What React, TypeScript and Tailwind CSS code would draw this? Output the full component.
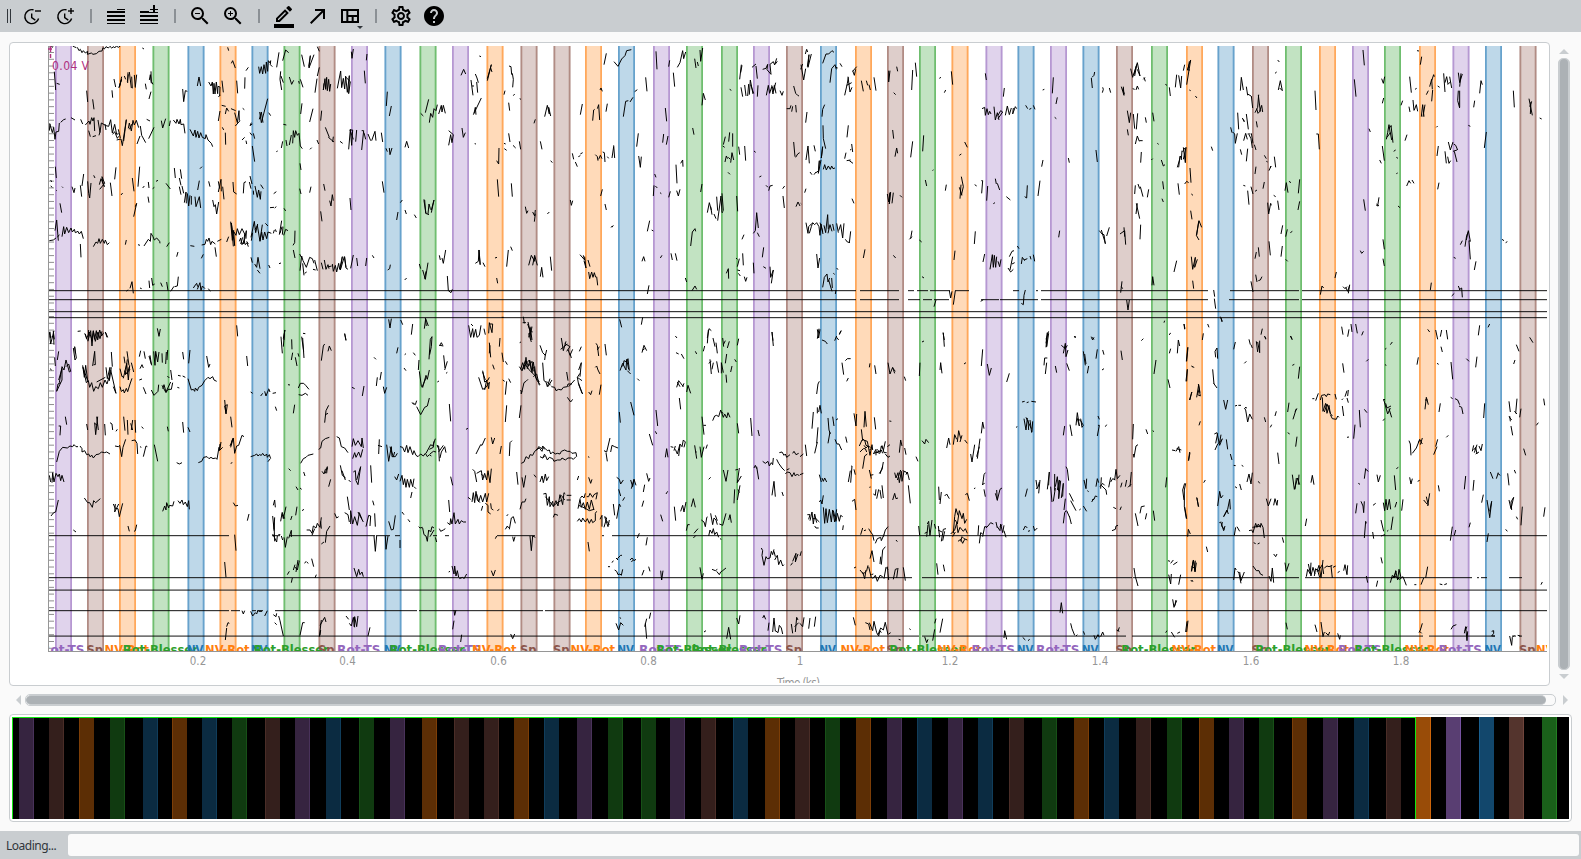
import React from "react";
import {
  MdCallMade,
  MdHelp,
  MdOutlineBorderColor,
  MdOutlineSettings,
  MdOutlineViewQuilt,
  MdZoomIn,
  MdZoomOut,
} from "react-icons/md";

type Kind = "P" | "S" | "O" | "G" | "B";

const COLORS: Record<Kind, string> = { P: "#9467bd", S: "#8c564b", O: "#ff7f0e", G: "#2ca02c", B: "#1f77b4" };
const LABELS: Record<Kind, [string, number]> = {
  P: ["Rot-TS", 43.5],
  S: ["Sp", 16.5],
  O: ["NV-Rot", 44.5],
  G: ["Rot-Blesser", 75],
  B: ["NV", 16.5],
};
const DIM: Record<Kind, string> = { P: "#362440", S: "#341f1c", O: "#5c2e05", G: "#103a10", B: "#0b2b41" };
const DIM_EDGE: Record<Kind, string> = { P: "#49325a", S: "#4a2d27", O: "#7c3e07", G: "#175017", B: "#103d5b" };
const LIT: Record<Kind, string> = { P: "#593e72", S: "#54342d", O: "#994c08", G: "#1a601a", B: "#12476c" };
const LIT_EDGE: Record<Kind, string> = { P: "#7652a0", S: "#70453c", O: "#cc650b", G: "#238023", B: "#195f90" };

const EPOCHS: [number, Kind][] = [
  [55, "P"], [87, "S"], [119, "O"], [152.5, "G"], [187.5, "B"], [219.5, "O"], [251.5, "B"], [283.5, "G"],
  [318.5, "S"], [351, "P"], [384.5, "B"], [419.5, "G"], [452, "P"], [486.5, "O"], [520.5, "S"], [553.5, "S"],
  [585, "O"], [618, "B"], [653, "P"], [686, "G"], [721, "G"], [753, "P"], [786, "S"], [820, "B"], [855, "O"],
  [887, "S"], [919, "G"], [951.5, "O"], [985.5, "P"], [1017.5, "B"], [1050, "P"], [1082.5, "B"], [1116, "S"],
  [1151, "G"], [1186, "O"], [1217.5, "B"], [1252, "S"], [1285, "G"], [1319, "O"], [1352, "P"], [1384, "G"],
  [1419, "O"], [1452.5, "P"], [1485, "B"], [1519.5, "S"],
];

const OVERVIEW: [number, Kind][] = [
  [19, "P"], [49, "S"], [79, "O"], [110, "G"], [143, "B"], [172, "O"], [202, "B"], [232, "G"], [265, "S"],
  [295, "P"], [326, "B"], [359, "G"], [390, "P"], [422, "O"], [454, "S"], [484, "S"], [514, "O"], [544, "B"],
  [577, "P"], [608, "G"], [641, "G"], [670, "P"], [701, "S"], [733, "B"], [765, "O"], [795, "S"], [825, "G"],
  [856, "O"], [887, "P"], [917, "B"], [948, "P"], [978, "B"], [1009, "S"], [1042, "G"], [1074, "O"],
  [1104, "B"], [1136, "S"], [1167, "G"], [1199, "O"], [1229, "P"], [1259, "G"], [1292, "O"], [1323, "P"],
  [1354, "B"], [1386, "S"], [1416, "O"], [1446, "P"], [1479, "B"], [1509, "S"], [1542, "G"],
];

const FLAT: [number, number[]][] = [
  [290, [49, 856, 860, 899, 908, 914, 917, 928, 930, 950, 955, 969, 1013, 1019, 1036, 1038, 1041, 1208, 1230, 1299, 1302, 1547]],
  [299, [49, 856, 860, 899, 908, 920, 923, 932, 934, 949, 981, 999, 1000, 1038, 1041, 1208, 1229, 1299, 1302, 1547]],
  [311, [49, 1547]],
  [317, [49, 1547]],
  [535, [49, 229, 272, 280, 289, 375, 376, 390, 395, 400, 433, 437, 445, 449, 497, 535, 602, 604, 612, 1547]],
  [577, [49, 912, 922, 1132, 1133, 1299, 1305, 1472, 1477, 1479, 1481, 1487, 1509, 1522]],
  [589.5, [49, 1547]],
  [610, [49, 229, 231, 240, 252, 256, 258, 263, 275, 417, 419, 543, 545, 1547]],
  [635.5, [49, 919, 922, 1126, 1132, 1423, 1429, 1495, 1512, 1516, 1519, 1522]],
];

/** Spike traces, three units per pixel, one block for each 400 px section. */
const TRACES: [number, number, string][] = [
  [0, 40, `M148 22l4-4 4 4 4-3M218 18l6 3 5 2M232 22l5 10 4-4 5 10 4-6 6 7 7-5-1 9 12-4 5 4 10-2 8-7 9-1 3-10 4 4 5-7 7 4 5-5 5 5 6-4 3 4 5-6 6 4 6-4M427 24l5 3
M163 95l4 55M170 130l9 3M260 152l3 34M278 178l4 30M342 117l5 24M336 151l2 22M357 143l8-26-8 26M365 110l-6 30M373 108l4 10M384 97l-1 32M382 125l3-22M388 96l6 48M397 145l-2-35M403 105l3 38M406 140l4-36M436 131l3 17M448 120l3-16 3 26M453 94l1 30 5 9M453 155l-6 22M548 147l3 38 5-33 6 2M592 138l5-27 5 27M626 126l7 12 4-12 3 36 2-32 3 32 4-36 4 35 1-22 6 2-1 27M655 170l6-4M666 122l4 35M694 70l4-8 8 22M683 22l3 10M710 122l3 38M735 112l-1 34M738 92l7-10
M776 80l3 20 5-20 4 22 4-28 5 26 2-34 4 28 2-32 4 6 3-6-1 12 6 6M830 82l7-45M848 62l9-32 9 8M842 94l-2 24 5 32M843 108l7 20M868 111l7 22 6-12M901 118l8 24M896 123l2 8M905 44l8 36M926 80l5-33-4 37 15-40M958 82l-6 26M952 20l6 14M945 158l6-42M972 130l-2 20 5-34 2 32 3-36 2 40 4-34 3 36 3-22M1012 145l10-52 3 50 5-28 4 32 3-38 5 48 6-50-2 54 5-36-16-16M1054 35l2 20 4-28M1099 61l2-19M1093 92l3 38M1162 155l-3 43M1168 228l6-30
M150 252l-2 20M149 250l8 28 4-16 4 36 3-22 8-2 2-25M182 247l9-8 6-2M213 233l12 7M242 238l6 14M256 255l11-12 3 10 5-20 4 10 3-10 2 40M266 272l5 18M278 290l10-3M294 240l6 37 4-28 14 8 8 2 6-20 5 40 7-26 6 30 6-2M297 286l3-10M318 270l-3-18M338 283l6-8 8 20 4-6M350 300l13-3 4 20 12-78-8 64M355 268l6 26M385 265l3-16 6 24 5-32 4 14 6-14 7 22M388 268l8-16M411 312l9-24M421 258l4 28 12 22M440 238l10 5M446 296l16-34M484 242l4 22 9-28M508 258l3-16M520 240l8 10 3-12 6 14 4-14 2 16 8-2 4 28M570 268l10 20 5-18 3 22 5-18 4 20 5-16 5 14 9 4 2-12 6 16 10 10 4 10M655 243l5-30M665 196l12 3M676 222l4-18 6 10M693 206l14 6M704 218l8 30 5-36 1 30M706 258l14-16M728 205l5 4M667 262l4 8M676 278l1 36M726 300l8-8M740 312l-2-10M750 278l6 8M760 280l4 16M757 318l7 47M750 258l4-10M779 216l5 32 19-72M778 238l6-22 5 32M806 218l6 9M850 253l9 2M829 335l4-2M844 324l4-20M858 300l3 18M868 315l6-30M878 310l2-38 4 20 3-20 5 14 5-6 4 38 6 8M902 222l4-32M929 246l10-40M962 242l3-30M930 328l5-5M951 300l5 12M976 262l12 30M985 292l17 14M1000 290l-2 16M1020 304l8 6M1046 328l5-60 4 48 3-46-8 0 10 28M1070 270l-3 35M1085 330l6-58-6 0M1092 278l5 20M1104 282l8 20M1115 302l10-28 3 28M1144 278l4 28M757 252l-6 4M1158 325l4 10M1168 324l2 20 6-20
M166 380l3 34M152 420l3 6M152 438l5 4M186 440l3 3M168 450l2 2M216 440l6 18 3-14M241 436l4 34M246 438l5-36M263 424l3 36 3 14 4-45M281 406l4 8M298 434l5-18 10 24-5-14-2-16 8 20-15 18M331 428l5 40M344 418l4-36M363 465l5-6M397 414l5 40M414 440l5-60M428 444l5-6M445 426l2 18M458 446l5-4M468 424l6-3M498 430l13 17M523 384l3 30M541 388l4 28M538 414l5 22M538 440l5 24M546 438l5 22M553 488l5-32 1 34M562 460l4 38 4-32M574 494l0-26M585 470l3 30 10-30 4 34M593 450l5-28M600 386l6-6M626 424l4 16M655 456l8-38 1 36M655 424l4 22M668 440l4 38M699 426l2 30 9 6M730 460l2-32 6-3M750 408l6 24M748 426l5 20M760 452l1 12M765 438l7 34 4-22 5 28 2-24M782 434l8 12M821 461l8-6M810 503l12-1M824 504l5-4M899 446l4 16M929 458l4-18M971 432l4 20M900 370l3 20M180 490l5 28M401 530l9-40-4 10M444 470l3 18M638 480l4 20 4-6 4 28 6-36M989 482l4 16 4-34 3 18M1050 474l3 36M1147 424l5 34M852 505l5 8M962 514l4 30M1190 540l4-24
M148 602l12-2 8-6M165 572l5-32 5 62M172 592l6-8M186 590l5-30 3 22 6-20 6 16 7-14 4 12 6-8 3 10 8-4 4 8 6-8 6 22M241 612l2 40M280 620l8-14 5 4 4-14 4 14 6-12 6 12 3-10 6 14 6-6M376 614l3-14M414 614l6 2M432 618l13-20 6 6 2-24 6 10 4 10 7-6 9 10 1 6M500 620l8-12M571 617l12 2M605 615l10-2 4-15 4 6 4-10 5 20 4-10 10 8M652 604l12-6M680 606l6-16M692 545l5 56 4-30 3 46-10-68 6 70M702 576l6 10 4-20 6 18 8-18 8 16-3 30 8-40-1 24M718 604l4-10 4 20 6-12 4 12 5-6 4 12M728 592l-6 20M740 604l5 8M753 592l10-48 4 34 6-26M758 578l-4 24M772 556l8 48 5-28 4 24 5-24 6 20 4-20 10 4M765 568l8-12M796 550l8 8M780 602l7-48M820 580l3-10M826 568l3 8M838 584l7-42M846 560l-6 20M849 560l-2 24M851 586l6-18 7 4M885 572l-1 36-5 8M880 630l5 24M530 650l4-14M604 655l6-12M645 622l4 28M753 652l4 16M764 672l6 10 4-30 6 34M772 690l8 10M806 675l4 9M837 671l6-2M900 692l5-44 4 14 10 20 10-30 8 4 5 14M899 642l5 10M908 670l4 36M914 700l6-4M939 688l8 2M944 660l8 32M964 668l5 20M973 660l5 28 6-14 3 12M987 680l8-2M997 672l3 22 6-18 4 20 6-26 3 18 8-38-6 40 12-40 5 32M1034 650l4 34 6 4M1052 685l8-40M1070 654l3 24M1097 678l3-24M1117 646l5 8M1163 690l6-4 2-12
M380 754l4-5M390 745l6-20 4 35M420 744l5 2M447 722l2 22M455 714l3 22 6-4M482 728l5 12M500 726l4 26M512 754l10-15M524 740l8-2 3-28M580 744l4-6 6-8 3 10M592 748l8-20 3 24 4-14 8 8M625 746l6 8M710 856l3 33M472 865l5 24 4-22M1166 838l4 26 4-28M152 895l-2-20M160 874l3 24M233 874l9-1M254 880l6 14M262 892l6-16 8 24 4-28 4 26 5-26 4 28 6-30 6 18 6-10M317 878l6 14M855 870l-5 26M909 880l7 1M1034 882l4 18`],
  [400, 40, `M238 48l5 2M183 106l8-18 6 14M213 120l6 46M216 138l6 0M226 102l5 12 4 14M230 126l3 32M220 224l24-50M222 220l4-18 2 22M262 122l12-48-12 42M272 84l4 12M327 78l6 2 2 24M337 100l3 18-2 24M312 164l3-12M340 167l4-5M326 188l3 24M359 176l4 2M402 250l4-12M434 230l8-34 6 26-2-20 6 26M541 224l6-32M612 74l7-34M600 150l3-6 4 10M578 242l3-32 3-2M592 206l4-12 3 46M618 215l4-24M642 65l12 14 11-22 10-10 5-15 14-3M670 230l7-46 8-2M690 186l9-14M704 155l8-6M737 112l4 42M768 34l3 54M806 80l3-19M832 82l8-14 8-36 3 24 6-20M820 98l4 42M884 56l4 28M892 66l3 12M900 30l2 34 6-40M906 196l4-36 6 20M989 148l5 3M1019 118l5-44M1022 98l4-22M1056 82l12-10M1068 78l4 38M1088 88l10-3 5-12-2 16 12 14-3-30 10-8 4 10 6-20M1028 170l-5-28M1034 135l4 33M1043 168l3-36M1048 164l3-44 8 42M1052 134l9 26M1072 170l2-34M1099 166l6-30 4 24 6-20 4 22 4-26 5 24M1115 136l6 16 6-24M1140 152l6 14 4-12M1126 72l6-8M1181 138l6 22 6 6 4 2M1160 206l10 0 3-10M1175 215l3-16M1187 195l2 22
M62 220l8 8M76 218l10-40M88 248l4-28 6 12 4-26 6 6 4-18M116 222l8-26 2 20 4-20 6 24M186 264l4 28 6-14M146 272l14 12-4 24-4-24-6 32M224 311l4 1M326 280l4 26M312 310l5 2M313 326l7 5M339 316l8 8M358 304l4 24M15 322l5-18 6 20M1 488l6-8M290 362l6 10 1-48M421 304l5 24M292 418l4 52M334 430l3 40M517 340l4 18M535 350l6-3M526 366l6 14M541 342l7-4M452 362l5 6M586 344l6 6 2 12M596 358l5-12 5 10M608 336l5 2 2 28M622 350l4 5M636 354l5-34M641 316l3 38M710 320l5-40M716 348l5 34 3-32M788 308l3-26M799 314l5-26M796 204l4 40M828 374l3 56M842 370l6-10 1 20M878 264l4 20M970 314l6-24M968 318l6 4M986 305l3-28M998 320l0-40M975 366l4-18 4 8M985 352l6 6M992 368l4-30 5 22M1016 320l3 24M1034 318l3 44M1062 333l5 4M1181 306l4 44M1187 352l6-10 6-4M764 402l4 10M602 468l5-20M615 492l4 18M766 438l6 6M760 468l2-32M780 458l4 3M806 472l5-18M830 452l5 16 5-20M902 456l4-24M984 397l6 6M1098 436l6 6M1106 452l4-14 8-2M1078 411l6-3M1148 446l6-8M1149 468l4 36M511 480l3 16 4-14M636 562l4-6M70 480l4 0 3 40 10 4M72 482l6 38M84 522l3-30 4 14 3 4 8-30-8 38M15 510l4 12M43 524l6 10M376 500l4 20 4-8M398 516l6 12 2-18M403 545l3-24M442 522l6-6M742 574l7-32M755 570l5 3M922 518l6-30 6 22M932 500l4 24M942 522l6 14M950 470l3 42M953 542l10-74 3 50 4-4M966 460l4 52M1010 468l3 46M1188 500l6-14 6 12M872 618l5-42 8-10 2 8M1060 580l6-8 4-54 5 46M1026 598l6-14M1072 578l6 12M742 762l5-26M633 562l4-4
M118 646l3 14M126 654l4 16 7-40M226 670l9-6 2-34 4 44M237 630l3 44M249 668l6 12M285 654l6-2M320 680l5-50M332 620l5 12M386 676l8-30 10 18 0-14M398 676l6-30 8 30M421 710l4-28 4 30M451 650l4 42M540 644l14 16-4-14M552 662l6 22-4-34M564 660l6 20M566 696l3 20 6-20 4 16 4-14 4 14M590 710l3 26M726 664l5-14 4 14M781 654l5-8M813 640l4 20M826 640l5 22M1012 680l6-24M1012 690l8 2M1008 654l4 4M1028 640l2 36M1087 652l4-30M1060 668l2 32M979 700l6-14 1 30M1015 700l6 8M1090 680l8 5M1110 680l2 32 8-22-6 40M856 714l4 12M876 752l9-14 5 10M1033 710l4 14 4-12M58 672l4 14M68 690l8 28 8-50M74 716l4-22M14 720l6-6M142 708l3 44 8 6 4-10M290 714l3 16
M2 840l6 14M34 884l4-32M73 866l4-30 8 22M206 856l6 36 6-26 3 26 6-24 4 24 7-6 5-30M213 852l6 6M252 866l4 18M266 880l2-32 8 30 2-26-8 0M305 832l6 0M370 830l3 20M384 846l8 34 4-20M378 848l-10 0M386 892l7-32M392 870l4 30M659 838l6 24M724 854l4-22M922 894l5-28 7 6M1116 876l3 26M826 888l5 6M76 834l3 24`],
  [800, 40, `M16 42l4-14 3 8M22 80l5-36-3 38 10-40M68 70l10-28 8 0 10-10 6 5M3 74l8 46 6-34M2 88l6-16M90 128l5-42 10-12 4 14M108 82l5 2M120 70l6 10M158 92l5 14 4-18M158 94l12-14M134 166l8-36 3-18M144 110l6 46 6-14M140 136l15-8M184 122l6 32M199 122l4 14M207 134l4 16M222 112l6 40M266 92l0 34M266 126l4-34M290 80l3 14M281 158l6 6M335 150l3-60M346 68l4 42M418 115l5-3M433 158l4-8M454 94l4 40M556 100l3 20M610 170l3-26M728 150l5-2M757 160l3-48M874 114l3 30M876 112l6-6 2-10M907 158l3-10-2-6M928 144l4 14M964 140l8 26-2-26M968 146l5 16M992 86l6 26 12-38-6 34M1002 104l10-36 8 40-8-20M998 146l6 2M1008 150l4-12 4 10M1032 112l4 12M1030 118l5-5M1096 133l5 3M1108 142l3 26M1126 142l4-38M1136 106l6 38 3-36M1150 92l4-18M1160 134l12-74-10 30 8 0M1164 90l4-26M1168 150l4 2M1186 168l5 6M982 212l6 36 4-30M1000 222l4 44M1009 268l4-48M1036 232l3 16M1058 218l4 26M982 268l3 18M1006 312l6-24 6 16M1018 302l10 0M1022 368l2-32
M66 230l2-22 6-14M17 248l4-32M69 256l1 40 7 30M64 354l4-34-4 34M18 360l6-42 4 52M42 316l4 18M30 396l6 8M42 404l6-8M48 398l8-6 2-30-3 38 8-40M70 388l4-14 5 16 6-12 6 10 4-10 4 8 6-2M141 292l4-36M134 356l4-18M140 362l12-2M150 330l4-2M155 312l3 24M148 362l11 8M14 458l4-12M2 490l2 2M156 476l6 14M278 270l3 26M285 350l5-26 3 16M332 352l6-48M368 334l3-48M376 420l4 18M398 392l2-3M436 452l3-18M494 306l8 16M478 346l6-4M480 476l3-42M486 466l-8-24M484 410l6 30-6 26M524 434l6 4M544 422l4 0M545 460l3-38M560 482l3-44M586 416l3 16M592 430l7 20M580 491l5-3M619 470l12 10M674 470l6 4 2-38M714 468l6-46M768 192l4-20M764 232l5 4M725 380l4-20M805 354l3 14M888 330l4 36M546 206l8-4 2 24 5-20 4 18 4-10 4 8M582 200l4 40 6-22 5 22M594 236l14-20-6-4-8 14M616 226l6-28 6 26 6-20M640 204l-2 18 8-22 4 6M677 196l6 10M688 208l6-3M700 196l5 12M262 462l4 24 4-28-2 34 4-36M276 490l4-32M300 466l6 6M1054 360l4-4M1084 360l6 18 5-4M1072 310l4 3M1132 382l10-34M1136 382l4-34M1144 360l2-28M1150 322l6 46 2-46-8 36M1148 336l6-12M1170 384l3 44M1154 432l6-8 6 4M1134 430l4 34M1174 462l5 4M1088 424l3 24M1006 436l-2 26M1014 432l5 14M1021 440l8 30M1042 472l4-24M1086 476l4 10M1012 490l-4 32M1009 490l10 46M1020 598l2-44M1172 512l4 26M1190 586l6-42M1174 650l4 38 8-36-2 30 8-24M1178 722l3 24
M18 548l6 32 2-20 10-10M28 580l6-20 4-12 6 6 6-6 7 12 3 26 3-34 6 30M60 548l8 26M72 556l5 22 6-54 2 44M84 580l6-26 6 20M98 552l4 20M110 550l5 28M116 572l6-18 6 40 4-44M148 608l4-34M136 598l6 8 8 2M332 596l4-24M328 598l8-8M358 600l7 6M523 612l3-38M776 592l3-20M898 572l8 10 6 2 4 28M904 570l12 40M920 588l8-26M960 582l14-10 3 42M972 562l2 28M190 654l5-26M280 646l7 8M462 660l3-28M50 642l4 42 5-30M68 742l5-30 8-10 3 24 5-12M86 720l10 34M95 714l2 30M100 700l4 3M110 684l4 5M366 710l6 4M549 666l5-24M570 688l7-44 3 38 3-36 4 36 3-32M594 664l5 16 4-22M628 650l8-16 6-2M624 684l8 12 8-8M630 690l8-40M636 672l8-4M652 618l5 8M664 672l3-20 7 10M672 660l10-4M690 648l3 10M700 644l4 20M1122 696l8-34M1056 736l2-26 4 26M962 758l4-34M964 740l4 6M106 762l2-12M448 752l4 22 4-20M402 800l6-20M460 794l6-42M542 784l8-5M664 790l6 4 2-28 4-16M980 780l4 30 4-30
M52 896l5-30M118 882l6-10M110 892l6 8M429 878l4 22M738 898l8-24M822 890l6 2M1092 848l2-6M1152 852l2 16M874 890l8 8M1107 884l4-4`],
  [1181, 40, `M290 60l5 6M282 100l5-4M178 152l3-40 6 38M196 140l4 26M200 162l10 6M211 168l4 36M222 218l8-16 3-38M232 166l6 48M236 214l6-18 3 20M227 206l4 14 8-8M170 218l3 50M184 234l6 12M190 244l-3-6M196 222l6 46M226 244l3 18M149 262l4 16M155 276l6 6 2 28 6-30M188 302l6-22 5 18M204 284l6 12 4 28M200 282l8 0M211 280l5 30M220 314l5 16M178 328l4 16M196 364l4-38M91 320l4 12M250 346l6 10M260 366l-4-2M264 392l6-14M270 378l-2 6M280 350l4 32M222 402l3-22M187 436l6 2M200 452l4 42M210 440l6 22M222 454l6-4M246 446l4-20M278 466l6 4M260 488l3 34 6-32 2 6M290 482l4 28M292 150l6-28 6 30-8-8M402 152l3 58M406 282l6 0 3 46M546 30l4 46M520 118l5 52M718 74l4-24M708 32l6 1M602 116l5 14 4-20M604 190l4-16M660 196l5-14M564 266l4 10M616 298l4-20 4-24 4 28M622 264l10-6M618 292l10-14 4 22M630 256l6 52M638 334l6-4M646 352l5 3M646 401l4-2M604 318l6 44M596 360l5 10M672 302l6-18M686 110l5 48M702 148l5-3M696 180l3 32M684 200l3 16M700 210l6-16 4 20M721 230l4-36 4 36M732 194l-6 36M736 164l6-12M746 140l6-22 2 30M752 122l6-18 2 6M752 184l3-34M770 138l6 4M788 100l4 56M792 128l5-18 4 22M806 110l6 34M800 134l8-8M832 98l4 30 8-26M840 100l-4 40M832 152l-2 30 6 22M836 152l0 50M896 160l4-38 4 12M878 202l3-20M862 256l6 3M766 262l4-4M997 152l3 50M1044 176l10 50M1046 200l6-16M1050 186l-2 36M1076 234l6 3M910 324l6-48M768 348l4-30M770 448l4-20M802 306l6 24 8-24M818 312l6 4 6 14M816 334l12-4M820 334l8 32M792 334l4 36M800 350l4 20 5-8M677 438l7-16 5 8M693 420l6 10M548 478l5 34M586 496l4 2 4-26M586 492l8 6M651 498l6 5M312 452l4-24 5 30M324 424l6 4M352 460l4-42M351 510l5-26M300 582l5-26M314 590l5-22M328 578l6-4M264 604l4 42M300 650l4-32M314 658l6 6M222 656l4-20M232 622l3 28M224 704l4 22M232 722l6-2 5-10M210 724l6 32M606 598l4 30M606 656l4 22M538 632l4 8 6-6M838 614l6-12M852 620l5-34 6-12M856 600l6-28 6 32-4-2 4 56M818 652l6 3M880 690l5-26M963 598l6 4M974 608l5-3M462 714l4-18M418 764l5-26 5 6M486 740l6 6 6-6M494 742l6 12 6-18M502 760l4-26M748 750l3-22M812 768l8-8M832 738l4 10M834 750l8-6 2 28M98 750l3 20M100 776l4 30M118 830l6 14M80 852l4 10M54 600l-8-14 8-44 8 20
M482 860l4 24M500 890l4-22M510 852l3 24M524 852l5 28M542 886l5-12M740 868l6 8M764 870l6 28M778 890l4-20M796 870l4 28M892 886l4-30M921 862l5-10M9 852l3 14M64 900l3-20M240 884l4-18M250 888l5 8M329 888l4 8M120 834l3 12`],
  [0, 320, `M148 36l4 36M160 34l2 40M152 72l10-40M256 42l4 16M264 62l8-30 4 46 4-44 6 30 8-28 6 20 6-22M266 30l-2 34M316 36l5 16M176 94l-4 26M164 112l2 26M150 146l5 4M220 84l5 36 4-6-5-34 2 20M278 138l6-44 2 40-5 0M178 188l8-48 6 10 6-30 10 36 4-2M198 140l8-8 6 22M176 180l10-34 0 34-16 34 4-22 8-4M248 136l5 36 4-36 6 46-14-40 10 46 6-6 4 20 6-14 6 26 6-14 8 6 6-18 6 14 8-22 6 12 6-20M290 186l26-14M318 142l4 34 8-34-2 40 6-40M334 96l3 44M332 150l16 70M340 200l8 20M360 146l6 24 4 0M372 110l3 20M381 94l6 42M370 175l10-45 5 50 4-44M372 152l10 10 6-22M382 118l-6 46 14-16M394 128l7 28M364 215l6-6 3 10 6-14 4 10 8-26 5-14M360 200l4 14M418 110l4-18M432 94l4 22M447 108l8 28M450 106l4 26M461 94l4 42 2-42 6 32 4-30M486 100l1 28M497 132l2-36M503 90l-2 30M420 146l6-12 4 10M418 180l8-3M430 202l8 20M454 210l8 16 12-12 2-20M486 196l12 22 6-10 10 0 4-20M488 206l4-12 6 22 14-30M512 150l4 30M502 168l6 6M534 166l8 2M548 168l8 4M532 202l6 2M548 96l3 22M566 130l4-40M564 176l10 34 6-2 4 6 2-10 6 8 4-10 10-6 8-14 10-10 6 4 8-6 4 10 8 4M620 108l6 34 4-10M740 108l3 30M875 58l1 30M843 50l4 50M852 60l2-30-4 50M905 50l6 44M908 54l4 60M874 120l4-22M886 112l5 26M894 100l3 10M864 194l6 1M895 204l6-14 10 0 6 6 10 12M896 224l10 2 10-6 8 6M752 216l6 4M782 228l6-8M794 214l4 14 8-20M806 206l4 10M818 220l10-2M964 122l6-44 4-6M984 94l4-16 6 14M1034 40l4 22M1122 112l6 6M1129 198l3-26M1140 180l4-24M1190 100l4-18M1056 202l8 4M1087 228l5-30M1150 200l4 20 6-18M674 240l4 42 4-28-8 4 4 22M692 290l4 32M826 260l4 12M880 280l4-26M974 308l4-36 8-16M976 284l8-4
M196 290l4 24M180 346l2-28-6 0M260 312l3 18M284 308l3 36 6-54M284 310l8 6M290 290l5 40M314 312l2 34M330 308l6 4 2 18M348 334l4-6M371 290l4 42M382 300l2 44M394 330l4-30M392 310l6 20M405 300l2 38M425 320l5 6M502 320l3 14M548 306l3 32M564 322l6 14
M170 426l8-32 10-12 14 2 8-6 8 2 4-6 6 6 6 0M240 378l6 8 0 10 8-4 6 12 6-2 4 8 6-4 4 8 8-10 10-2 6-6 10 2 6-2 10 6M345 378l10 2 4-4 6 34 4-28 8-24M395 362l10-2 6 10 2 32M420 380l4 2M430 410l8-32 4 2M463 374l10 50M530 428l8 4 8-4M595 428l10-4 6-12 10-2 6 6 6-4 6 4 8-2 4 4 6-36 2 8 4-24M660 372l-2 20 10-10M692 382l6-26-4 20M690 378l10-24 4 46 6-22 6-2 10-30 6 4M692 430l5-2M752 410l12-4 6-4 4 6 4-4 6 2 4-6 6 8 6-6 2 10 6-8 4 12M804 425l6-8M902 430l8-14 8-4 6-6 16-4M956 388l6-4 4-20 10-8 12-4M1010 350l8 4 6 26 10 4 10 14M1056 380l4-24 6 20 8-14 10 18 2-26 4 30M1058 416l6-18 4 14 8-16 6 16 6-24M1134 376l12 4M1138 358l-2 44M1160 374l6 50 8-44 2 30 10 0 6-10M1170 380l10 30 4-14
M148 466l4 20M156 488l2-30 4 28 6-26 6 10 4-8 4 20 4-16 6 20M866 446l6 6M911 456l4 12M888 500l6 10M900 504l5 4M966 454l6 8 4-14 8-2M980 460l2-20-6 20M986 500l6-22M1021 436l6 30 10 8M1026 452l10 28M1046 480l6 6M1060 456l6-4 2 30 6 12 8-54-12 40M1112 436l3 52M1184 470l6 10 6-18
M153 588l8-10 6-2 8-36M253 534l10 14 6 0 8 14 4-20 6 6 14-12M340 552l6 14 8 0 4 24 10-40M346 552l-2 24 12-24M488 574l6-16 4 12 2-22 6 16 2-8 10 2 4-14M534 542l6 8 6-10 4 14 6-8 6 14 4-18 2 26M700 548l6 10 8-2M742 602l5-20M820 556l4-16 2 22M818 588l4 40M824 592l-2 40M818 642l12 24 2-18M822 608l2 56M842 604l4-24 4 16 8-36M846 576l8 20M872 600l4-12M887 586l4-26M906 572l6-4M1042 530l6 40M1034 578l10 6 4 22M1004 580l6 14 6-4M1052 612l0-40 6 40 6-22 8 26 6-38 8 20M1074 576l16 30M1098 620l8-34 6 2-2 30M1118 542l4 14M1124 580l2 40M1166 604l8 26 6-2 6-42M384 618l4 16M402 634l4-2 4-18M220 630l8 6M920 630l10 0 6 10 4-22 8 6 4-14 8 12 4-30M936 646l8-20M962 604l2 22M704 644l4 48M835 644l6 0M844 648l4 12M852 652l4 30 6-32M866 655l8-24 0 20M964 672l8-6M976 668l4-34 10-16M1122 648l4 46 4-46M1156 648l2 40 6-40M674 726l4 46M862 764l6-10M880 750l5-16M888 756l6-36M884 740l8 10 6-28M914 730l4-6M920 726l5 4M935 716l6 24M874 788l3-14M1062 744l8 26 6-22 4 16 6-8 4 14M945 774l4-10M676 960l4-36M680 920l4-12 4 2M726 872l4 10 4-10M752 874l6 14 8-10 4 4 4-12M776 874l10 0M794 888l8-16M820 884l8 6 2-10M824 908l6 6M836 888l4 14 10 46M900 946l8-38 6 0M958 950l6-50M960 916l14-24 4 14M960 946l2-16M1038 888l8 10M1048 910l6 8 6-26 4 30M1062 920l2-30 6 30 4-32M1104 948l6-26`],
  [400, 320, `M268 68l4 44M270 76l-2 24M300 54l-2 26M306 98l4 28M316 124l6 10M278 134l5 14M87 118l4-60 5-8-2 30-5 24M57 120l-2 30M58 154l6 44 4 4 10-36 4 12 6-28M66 202l12-28M118 78l6-10 4 8M120 76l10 2M131 106l4 38M134 150l8-26M138 160l4-3M112 186l5-3M12 144l6 8M14 104l4-3M40 98l6 8M359 68l4-2M383 12l8 24 2 24M390 30l8 6M386 40l8 26M38 248l8 6 4-12M50 260l12 24 12-22 8-4 6-24M148 252l4 52M236 172l12 36 8-4 12-16M248 152l6 34 10-6 4-8M254 210l6-30 6 26 2-20M248 156l8 24M308 180l6 4M316 224l4-40M326 176l6 12M360 212l6 2-4 6M364 222l8-34 6-4 6-6M420 76l8 22 8 8 4-16M434 120l2-16M428 128l4 54 6 4 4 14 8-24M444 200l12-20M440 184l12 12M454 200l10 2 4 10 8-4 8 2 6-8 12-2 2-8 12 0M506 200l18-20M484 54l6 38 8-28M482 88l20-16M494 70l16 10-10 14M504 88l6 18 8-18M510 100l4 14M500 156l4 26M538 94l6-14M536 150l8-22-4 42M540 160l-8 12 14 10M532 172l4 22 12 28M536 190l10 30M588 70l4 6 4 32M592 90l6-10M586 142l4-4 4 12 6 12M615 72l4 34M598 224l5-30M566 216l6 8 4-12M362 148l6-20 6 20 4-36 4 34 8-24 6 36 4-32 6 42M358 140l8 12 10-18 12 16 8 8 10 10 4 12 10 14M372 138l16-18 6 30 10-10 4 34 10 12M366 152l10-30 10 16 10-14 4 30M400 170l10-8 8 34M664 140l6-4 2-14 8 4 4-10 4 36M660 152l8-22 10 20 2-32 6 30M682 152l10 10M726 98l6-22 8 16M726 92l8-6M712 176l6 6M828 98l8 4M844 102l8 14M886 94l4 8M910 94l4-16M922 70l3-40M939 54l6 26M948 68l4 32M968 54l3 26M970 74l6-12M982 84l6-20M1012 76l4-20M1116 36l4 42M930 118l4 44M926 130l8-6M936 148l4-20M950 124l6 34M964 160l0-32 6 30M976 130l4-28M992 156l4-18M1004 118l5 8M978 164l2 24M830 202l6-20 14 18M832 186l8 14M860 216l4-20 8 24M848 200l4-10
M320 256l-4 50M358 294l5-38M502 232l10 14 6-8M658 276l3 32M692 246l10 40M768 270l5 48M766 334l4 8M748 342l10 34M796 412l4-26 4 26M838 234l4 34M906 290l6 54M910 316l8 0M938 302l6-14 6-2 6 4 6-20 8 22 4-10 6 12 4-16 6 14M964 276l6 4M1052 294l4 54M1012 310l4 30M1074 330l4 18M198 328l6-3M36 248l6 6
M0 380l8 2 6 14 6-20 4 22 6-18 8 24 4-12 6 14 6 4 8-8 8 6 6-8 6 10 6-6 6 4M90 402l10-8 8 2M78 400l14-26 6 4 8-22M88 388l12-6 2-18M110 376l6 2 2 46M112 378l6 12M120 414l4-18 10-16 4 18M116 396l14-20M228 402l14-28 4 2 10-22M274 352l4 20 6-18M300 402l4-24M328 408l2-40 6-6M364 430l8-4 6-16 8 6 4-12 8 2 6-12 8-6 4-8 10 6 2-8 8 8 6 6 6-2 4 12 6-6 8 6 6-2 8 2 4-8 10-4 8 4 8 0 6 6 12-2 2 12M408 390l10-6 8 10 4-12 4 6M420 410l8 4 8-8 6 14 6-8 10 4 4 8 10-4 10 0 4-6 10 6 8-6 10 0 6 4M428 414l6-12M520 418l8-8M564 410l4 2M612 392l8 4 10-42M618 398l4 26M632 396l4-20 8 4 10 4M812 380l8 2M822 392l4-14M826 388l6 14 8-30 6 8 4-20 6 6-4 16M836 408l4-32M884 376l6 40M886 396l4 0M900 380l4 32 8-32M918 386l4-12M1138 398l8-2 6 10 4-4 4 10 10-8M1178 400l4-6 6 10 8-4M1088 424l8 6 8-6 4 14 6-10 4 6 2-20M1130 418l6 12 10 14 8 8M1156 462l6-6 8 2 6 12 6-12 4 10 6-6 6 6M1160 450l8-4M1062 444l4-8 4 10M1070 440l6 38
M0 484l6-18 4 28 4-18 4 26 4-24 6 24 4-24 6 22 4-24M42 500l6 6M32 534l4-18M152 470l6 26M218 448l6 6 6 32M230 460l14-8 4 28 6-20 6 20 4-28 6 36 4-42M244 462l10 10M350 456l4 38M366 472l5 30 6-36M402 464l6 8M420 486l6-18 4 20 6-26 4 20 6-12M532 480l4-12M566 472l6 18 4-12M650 472l8 6 4 14 8-12M692 480l6 20 4-22 6 18M694 506l8-28M740 460l6 24 4-10M730 516l4-22M798 522l5-8M926 478l6-6M970 450l8 34 6-34M1006 450l8-2M1018 444l-6 44 12-20M1004 508l-2 42M1012 540l8-44M1014 508l4 10M1116 526l6-42 4 46M1146 516l4 12
M204 532l8 6M216 546l4-28 4 30 4-34 4 26 8 8M230 522l6 24 6-20 6 20 8-26 4 26 6-26M244 572l4-14M256 550l8 6 0 20 8 6M272 550l2 16 6 4M292 572l6-4M360 568l6-22 8 0 4-10M430 522l8-2 4 36 6-26 2 30 8-16 2 16 8-18 6 16 6-34 8 30 4-36 4 4M436 530l12 14 12 14 12-10 14-8M460 592l4-10 10 4M484 526l10 14M500 526l14 0M500 540l12 0M540 536l6-8 6 6 4-14M534 566l6-28 4 24 6-14 6 20 6-22 6 22 6-28 8 30M560 530l6 0 4-10 8 12 4-8 10-6-4 20M532 604l6-8 6 10 4-12 8 12 6-10 6 14 6-12 4 10 8-6 0-22 4-6M536 556l18 8 14 8 14-4M600 598l6-12 0 34M612 622l8-28-6-4 10 30 4-20M618 600l10 14M640 552l4 34M650 596l8-44 4 8M656 508l6 20M668 542l6-10M726 560l5-18M782 584l6 20M823 560l4 42M842 574l6-18 4 20 6-30M874 560l6-24 6 26M859 632l4-18 6 0M904 600l8 6 4 14 4-26 2-4M932 580l6 34 4-20 6 6 4 14M946 586l6 16M958 612l10 4 10-36M986 600l4-16 4 24M926 648l4-18 6 10 4-14 4 18 6-8 6 16M882 640l12-14M880 654l8-8M960 656l4 2
M146 540l3 36M142 608l8 6 2-18 4 16 6-34 4 34 8-14 4 14 6-10 6 4 8 0M6 576l6 8M24 598l6 8M56 620l4 4 8-2M68 624l4 20 6 4 4 16 4-34 6 6 4-16 6 4M90 650l12-20M106 652l4 14M118 626l4 8 8-4 6-4M316 628l6-10 4 6M328 628l6-34 6-4 6 20M320 588l4-5M286 656l4-8M338 650l3 14 4-14M390 648l4 44 4-44 8 4M564 666l4 28M712 654l6-14M738 676l4-24M0 660l0 24
M146 756l4-2M156 738l6 24 2-24 4 30 4-16 4 20M178 776l10-4 4 4 8-14M274 752l6 16 6-18M624 740l6 0M636 728l4-6M648 714l6 6M652 716l10-10 4 0M644 750l6 4 4 10 6-2 4 4 4-18M690 720l6-6 6 8 6-4M694 726l6-6M726 766l6-16M746 740l4 14M782 752l3 28 4-28M900 742l6 36 4-18M936 748l10 4 6-4M950 754l8 10 4-8 6-4 10-8M1084 684l4 8-2 14 6 30 6-26 4 6 8-2 4-20 4 10 4-16M1122 694l4 16M1124 720l8-14 4 28 6-14 6 18 4-4M1172 736l6-8M1178 724l10-24-2 26 8-24M158 928l4-26M162 870l2 16 4-16M182 966l3-22M332 942l6 14 6-14M648 910l8 20 6-22 8 8M660 892l2 4M734 920l6-24M736 910l4 46M748 896l4-18M912 936l6-4M980 956l6-34 6 36M1010 894l6 18 4-26M1088 894l4-8 5 12M1104 932l3-24M1118 936l4-42 4 40M1126 932l8 6 4-22 6 8 4 18M1174 912l4 28M1186 936l4-44 4 8M1184 920l12-12`],
  [800, 320, `M52 28l4 26 4-26M66 60l10 4 6 8M104 62l6-14M118 44l5-12M126 128l5 36M136 122l6-6 10 0M140 184l5-10M50 222l4-30 4-8M52 262l0 18M56 276l4-20 4 24M36 326l4-50M84 294l3 36 4 12M98 290l4 28M84 370l6-34M108 300l6-4M137 350l4 18M50 370l4-48M44 400l8-34M105 358l6 14 6 0 8 18M16 374l4 34M0 410l10-8M0 464l10-4M162 280l6 38 2-36M192 322l3-48 4 46M223 292l4 36M210 130l-2 12M224 136l4 26M264 128l6 34 8-20 6 18M278 144l8 10M313 170l4 12M360 128l-2 40M420 150l2-22 4 32M430 38l3 42M366 66l6-3M492 132l6-4M544 138l4-50M562 132l6 34 6-22M620 186l8-26M738 82l4-44-2 42 6-40M738 70l2-16M822 50l6 1M874 52l4 8 4-8M963 92l4 28M1024 62l6-6M784 76l12 10 6-10M790 100l6-30 2 40 6-20M732 136l2-22 8 0M736 162l4-34M766 138l4 20M800 130l8 22M850 94l6 42M854 102l4 30M862 160l4-22M888 116l4-28M908 90l4 14M906 150l6-4M1062 162l6-42M1104 178l6 26M1108 100l4-14M1132 100l3-40 4 18M1160 124l4-42M1174 138l6 4M1160 184l2-36M1168 240l8-24M1190 232l6-38 4 24M1108 44l4-4M666 246l8-2M680 248l6-2M694 244l14 2
M268 303l6 1M648 322l4-2M672 296l6 34 4-36M684 300l2 30M690 300l5 38M678 292l16 34M696 336l2-32M790 346l4-28M810 314l6 34M828 316l4-38 6 40M838 318l-6-22 10 6 8 14-4 6-4-26M894 288l4 10M892 348l6-32-4 0M916 320l4-6M998 358l2-46M1038 328l5 14M1058 332l4 3
M178 378l8-18 6-2M184 328l4 34M190 360l12 4 2 10M180 396l10-10 6 0 4 10M188 446l6-38 8-6M192 376l6 8 6-6M204 374l6 32 6-32 2 16M220 402l8-14 0 18M232 388l6 8 6-6 4 10M240 400l4-22 4 8M250 392l6-28M246 376l6 22 8 0M262 380l8-6M208 390l6-4M228 396l12 4M256 402l8 10 6-4M194 360l4 16 14 6M222 400l20-8M298 398l4-38 4 18M314 384l4 20M366 362l8 10 4-14 8 10M348 410l6 14M440 384l6-30 4 20M460 374l4-30 6 14M472 366l4-34 6 24M480 366l6-20M494 360l8 10M512 402l4 24 8-52M530 410l8-30M532 416l8-60M544 340l4-34 4 20M1166 422l4-24M1000 402l2 10 6-34 6-4M1116 390l10 2M1128 394l8-14 4 18M1130 386l14 4
M250 426l-4 22-8 12M208 450l6 26M210 466l10-2M240 462l8-22M145 486l6-34M152 488l4-50-2 0M162 448l4 16M284 458l4 16 6-16 4 30 6-34 2 30 6-30M318 464l4-8 6 24M308 452l10 4 4 6M292 480l10-30M58 464l6 22M66 474l4 10 4-10 6 12M220 522l6 4 2-18M230 536l6-28M240 510l4 26M246 496l4 38M208 502l4-1M278 540l6-20 4 16 6-2M325 496l6 54M416 500l2 40M420 552l4-36M434 528l6-6 8 14M548 494l4-30 4-6M522 506l4-2M552 508l4 22M546 494l8-4M586 520l6 20 8-32 6-4M590 510l2 32M676 530l6-24M708 480l4 26M716 520l4-40M708 506l6-4 4-16M742 508l6-52-2 40M764 462l0 50M752 500l4 46M766 500l6-30 4 44M772 510l6-30-2 56 6-54M784 534l6-44-2 40M760 544l6-40M798 440l4 8 4 34M808 520l12 24M812 542l16 30M790 610l4-32 4-6M800 572l8 18M808 588l6 24M792 570l4-34M852 480l6 26 2-30M862 512l4 3M888 500l4-24 4 12M902 506l2-34M900 500l8-10 6 6M904 496l14 14 2 14M926 502l6-30M932 486l6-10 8 4M944 480l4-32 4 28 8-10M962 502l4-14M976 500l4-20M990 500l4-44M984 502l10-10M875 546l6-10M876 540l6-2 4-10 6 2M496 524l6-4 6 22M940 562l8 4M960 570l4-10M1006 580l8 38M1020 580l4-20 10-2M1036 598l4-18M1060 572l4 30M1097 502l3-30M1152 540l-4-30 6-20M1154 560l6 36M1190 532l6 28
M22 584l8 0-4 14M30 602l6-26 4 36 4-30 6 26M38 596l10 0 10 10M44 618l4 6 8 0M70 562l4 48 4-44 4 42 6-40 6 38 4-36 6 36 6-38M100 572l8 32 4-24 6 24 4-18 6 4M58 546l4-6 4 12 4-26M156 544l8-6 4 32M128 630l2-14M182 644l6-20M192 632l6-2M206 626l6 10 6 8 4 18M226 670l6-14 10-4 2 10 8-18M250 650l6-20 8-10M356 618l3 28M380 650l4-36M374 640l8-4M382 612l4-8 4 44M390 646l6-46M403 612l4 14M415 618l4 34M414 630l12 6M424 664l6-36 8-2M428 662l6-28M460 640l4-50 4-24 6 20M466 600l6 12 6-40 8 24 4-16 4 30 6-12M452 642l12-12 6-20 4 28 6-16 10 12 6-8 6 14M458 650l8-14M474 664l8-6 6 12 6-12M482 664l4-14 6 6 10 4M536 616l-2 30M538 670l4-32 6 4M548 650l6-30 6 0M558 624l6-6 8-10 8 4M588 606l4 18M592 620l8 12 2-20 6 26 4-22M600 620l6-6M612 632l6 20M670 630l6-12 6 6M684 634l6-2M700 618l4 14 8-8M850 558l10 16M838 570l4-3M936 632l10-4 2-10 6-2M244 734l4-44 8-10M210 716l6-24 6 34M240 732l2-22M0 708l4-14M288 660l4 5M162 744l6-3M180 750l10 12 10-10 4-16M188 756l6 20 4-26M206 740l8 34M218 776l8-10 6 18 8-18 8 4M214 764l6-2M252 776l6-34 6 6M262 740l4 40M280 778l6-30 6-2M290 774l4-30M310 742l6 40M410 730l4 34M430 734l4 20M1002 744l4 26 8 28M1104 722l6 2M1112 730l8-10M1120 734l12-8M1106 764l6 28 2-30M1136 794l6-30M1174 754l6-34 6 34M1184 752l2-30M1172 782l6 2M1118 838l4 24 8-20M1124 858l4-18M780 878l4-30 4 32M1160 936l4-34
M0 910l8 10 4-28M26 926l4-32M43 920l4-30M160 892l6 24M196 908l10 4 4 18M208 908l10 24 4-28 8 34 6 10 4-16 4 6M234 944l8-20 8 6 6-24M256 908l8 36M266 942l6-4M296 958l6 2M328 926l4 3M374 950l6 18 4-10M398 962l6-34M404 910l4-14M420 938l8-42M612 954l2-22 6 26M668 952l8 8M684 962l5-4M812 910l4 16 8 20M828 948l4-4M850 934l4 10M882 946l4 12 8-14 4 8M902 950l6-14 4 10M954 934l4-12M950 930l8 4M1097 938l4-6M1114 936l10 16M1132 940l8-4`],
  [1181, 320, `M16 124l4-42M34 138l5 5M15 184l4-36M27 240l5-24M52 192l6 36-8-4 4-16M54 316l4-12M22 422l4-26M16 596l-6-36 0-50 4-20M48 534l4 26M68 488l5-8M76 680l4 16M95 148l4 44M98 190l10 14M104 112l-2-18 6-10 2 32M158 88l5-22M190 130l6-6M204 58l4 16M210 74l4 10M226 64l4 32M230 66l6 32 0-36M252 50l2 8M328 48l6 12M334 136l6-3M352 176l4-36M128 240l6 28 6-28M162 258l6-2M172 256l8 0M190 264l4 6 6 36 6-24 8 16M198 264l-6-2M250 292l4 14M268 322l4-8M282 288l4-14M100 342l8-4 8 38 8-20M104 370l6-30M102 390l8-18 14-14M116 368l4-24M136 358l4 30M148 402l5 18M158 436l6 1M182 436l5 3M198 486l6-24 6 30 4-34M232 484l4 6M162 500l6 4M176 492l5 18M290 398l4 34M320 276l4-28M342 274l6-8M336 298l10-32M320 338l6 4M344 380l4-30M334 464l6 44 10-34 6 20M342 508l4-34M354 464l-2 30M390 488l4-22 5 28M394 236l6 0M404 242l8-22M418 240l4-14 10-2 4 6 4-8 8 2M424 232l2 42 8-24 4 30 6-24 4 26M430 276l8-24 10 28 6 8M448 284l6 12 12 2 4-10 4 4M462 222l4 16M482 240l4-4M492 230l6-18M498 234l4 14M500 228l2-18M484 258l4 30M485 130l4 28M556 124l6-6M780 80l4 16M708 134l4-22M768 130l5 3M612 134l4 2M612 88l4-3M628 74l6-8M606 240l6-2M608 238l12 44 8-18M614 250l4 14 12-6M624 266l8 26M606 302l5-6M535 270l3 52M518 356l4-42M550 268l8 10M498 352l6-1M732 268l4-36 6 22M732 240l8 0M774 276l4-26M856 116l8 8M884 142l4-32M810 126l5 52M809 232l6 4M822 236l8 4 6 14M834 258l8 4 4 20M908 294l3-44M998 132l4-12M1006 74l8 20M1046 52l10 16M984 244l4 32M1004 280l4-44M1008 282l-8-8M1016 292l4-26M984 290l8 10M988 304l-2-16M990 318l5 28M1088 236l3 20M1066 316l6-8M1028 386l6 20M796 352l6-6M684 362l4 10 2 34M694 400l12-16 8-20 4-4M718 374l6-20M712 368l4-10 8 14M758 404l10-24M764 380l6-22M878 376l-4 18M880 398l8-24M884 402l10-6M894 378l6 14 4-20M878 390l6-8 4 20M550 476l4-30M552 446l10 8M532 490l5 3M588 464l4 22 6-20M640 466l4 44M646 446l6-4M686 472l4 20 4-16M710 484l6-3M772 496l3 18M850 508l4-40M876 512l3-32M928 456l8 20M946 476l6-18M950 460l8 6M980 460l4 36M1000 450l4 10
M110 558l6-44 4 20 6-8M128 590l10-20 4 12M128 590l12-22 6-30 2 30M115 608l6-2M120 608l8 24 4-14M124 606l-2 12 8 10M160 646l4-24M168 620l8 14M204 632l8-2 4 8 4-14 4-14 4 12 4-10 6 10 2-12 6 12 4 32M214 622l26-4M256 536l6 22 8-22M278 556l4-20 6 20 2-16M373 618l4-22M524 580l4-30M540 544l6 14 2 20 2-34M576 556l8-6M607 548l4 24 4-34 4 32 6-32 4 30M642 562l5-16M662 572l4-34M728 540l10 12M740 558l6-38M736 530l6 26M902 548l5-24M918 540l8 50M926 594l6-50-6 30M984 540l6 26 8-34-8 14 2 24M1006 590l4 8M1020 616l4-56M1088 590l4-28M550 654l4-50 2 6M578 656l-3-20M600 600l8 34M600 648l12-4M618 634l4-3M630 630l6-40M974 628l5 6M808 662l6-42M820 646l4-16M864 622l4-14M918 666l4-26M20 650l2-22 6 14M304 652l4 16M218 668l6 3M230 672l6-3M278 702l6 8 4-8M32 754l4-30M38 722l4 34 4-28M32 740l12 6M158 780l4-36 4 6M170 754l4 6 6 30M176 756l4 26 10-26M216 738l10 14 8 0 4 10 8 4M264 768l6 16 4-40 4 44M312 728l4 26 8-24M376 770l4-22 8 14 2-34M382 732l8 36 6-26 6 20M400 768l4-22 6 6 6 20M408 754l6-18 6 38 6-54M410 756l14-22 4 28M430 744l8-6 6 2 10-4M450 738l4 36M456 742l8-4M470 758l6-4M488 752l4-18 6 30 2-28M600 712l4 18M556 768l4 20M586 800l4-18M628 788l6-22 6 8 4-22 6 28 4-32 6 24M630 776l12-8 14 10 10-8 10 26M636 774l10-20M720 794l8-20M734 774l6-34M700 794l6 0M776 792l8 2M790 794l8-3M1080 794l4-8M14 936l4-32M32 780l4 4M315 908l4 20M402 914l6 22M420 906l6 44 4-14M434 938l8 8 4-10M470 940l6 18 2-12M714 938l4-8 6-20M716 934l6 6M810 928l6-10 10-4M850 940l4-20 4 42 2-28M852 932l6-12M932 934l6-2 0 8-6 8 10 0M986 948l6 28M992 976l2-24 6-6M1010 946l8 2`],
];

const TICKS: [number, string][] = [
  [198, "0.2"], [347.5, "0.4"], [498.5, "0.6"], [648.5, "0.8"], [800, "1"], [950, "1.2"], [1100, "1.4"], [1251, "1.6"], [1401, "1.8"],
];

const FONT = '"DejaVu Sans Condensed", "DejaVu Sans", sans-serif';

function TracePlot() {
  return (
    <svg width="1539" height="642" viewBox="10 43 1539 642" className="block">
      <defs>
        <clipPath id="plot">
          <rect x="49" y="46" width="1498" height="605" />
        </clipPath>
        <clipPath id="caption">
          <rect x="700" y="660" width="200" height="23" />
        </clipPath>
      </defs>
      <g clipPath="url(#plot)">
        {Array.from({ length: 90 }, (_, i) => (
          <rect key={i} x="49" y={52 + i * 6.77} width="5" height="1" fill="#8f8f8f" />
        ))}
        {EPOCHS.map(([x, kind], i) => (
          <g key={i} fill={COLORS[kind]}>
            <rect x={x} y="46" width="17" height="605" opacity="0.29" />
            <rect x={x} y="46" width="1.8" height="605" opacity="0.55" />
            <rect x={x + 15.2} y="46" width="1.8" height="605" opacity="0.55" />
          </g>
        ))}
        {[...EPOCHS, [1550.5, "O"] as [number, Kind]].map(([x, kind], i) => (
          <text
            key={i}
            x={x + 7.8}
            y="654"
            textAnchor="middle"
            textLength={LABELS[kind][1]}
            lengthAdjust="spacingAndGlyphs"
            fontFamily={FONT}
            fontWeight="700"
            fontSize="12"
            fill={COLORS[kind]}
          >
            {LABELS[kind][0]}
          </text>
        ))}
        {FLAT.map(([y, xs]) =>
          xs.map((x, i) =>
            i % 2 ? null : <rect key={`${y}-${i}`} x={x} y={y} width={xs[i + 1] - x} height="1.2" fill="#000" opacity="0.78" />,
          ),
        )}
        {TRACES.map(([x, y, d], i) => (
          <path
            key={i}
            transform={`translate(${x} ${y}) scale(0.33333)`}
            d={d}
            fill="none"
            stroke="#000"
            strokeWidth="3"
            strokeLinejoin="round"
          />
        ))}
      </g>
      <rect x="48" y="46" width="1" height="606" fill="#969696" />
      <rect x="48" y="651" width="1499" height="1" fill="#969696" />
      <path d="M50.5 46v6M50.5 54v4M48 49h4" stroke="#b0307f" strokeWidth="1.5" />
      <text x="52" y="70" fontFamily={FONT} fontSize="12" fill="#ae2f80" textLength="37">
        0.04 V
      </text>
      {TICKS.map(([x, label]) => (
        <text key={label} x={x} y="664.5" textAnchor="middle" fontFamily={FONT} fontSize="11.5" fill="#969696">
          {label}
        </text>
      ))}
      <g clipPath="url(#caption)">
        <text x="798.5" y="687" textAnchor="middle" fontFamily={FONT} fontSize="11.5" fill="#969696" textLength="43">
          Time (ks)
        </text>
      </g>
    </svg>
  );
}

function Overview() {
  return (
    <svg width="1557" height="102" viewBox="12 717 1557 102" className="block" shapeRendering="crispEdges">
      <rect x="12" y="717" width="1557" height="102" fill="#000" />
      {OVERVIEW.map(([x, kind], i) => {
        const lit = x >= 1416;
        return (
          <g key={i}>
            <rect x={x} y="717" width="15" height="102" fill={lit ? LIT[kind] : DIM[kind]} />
            <rect x={i % 3 === 2 ? x : x + 14} y="717" width="1" height="102" fill={lit ? LIT_EDGE[kind] : DIM_EDGE[kind]} />
          </g>
        );
      })}
      <path d="M12.5 819V717.5H1415.5V819" fill="none" stroke="#12e812" strokeWidth="1" />
    </svg>
  );
}

function Divider() {
  return <div className="h-3.5 w-0.5 bg-[#8b9095]" />;
}

function ClockIcon({ plus }: { plus?: boolean }) {
  return (
    <svg width="20" height="20" viewBox="0 0 20 20" fill="none" stroke="#000" strokeWidth="1.4">
      <path d="M10.5 3.8A7 7 0 1 0 15.6 12.5" />
      <path d="M8.7 7.5v4.2l3.6 2.4" />
      <path d="M12 5h6" />
      {plus && <path d="M15 2v6" />}
    </svg>
  );
}

function RowsIcon({ plus }: { plus?: boolean }) {
  return (
    <svg width="19" height="20" viewBox="0 0 19 20" fill="#000" shapeRendering="crispEdges">
      <path d={plus ? "M0 7h9v2H0zM0 11h18v2H0zM0 15h18v2H0zM0 19h18v1H0z" : "M0 7h18v2H0zM0 11h18v2H0zM0 15h18v2H0zM0 19h18v1H0z"} />
      {plus ? <path d="M10 5h8v1h-8zM13 1h2v8h-2zM9 8h9v1H9z" /> : <path d="M10 5h8v1h-8z" />}
    </svg>
  );
}

function Toolbar() {
  return (
    <div className="flex h-8 items-center bg-[#c9cdd0] pl-[7px] text-black">
      <div className="h-3.5 w-1 border-x border-[#31363b]" />
      <div className="ml-[12px]"><ClockIcon /></div>
      <div className="ml-[13px]"><ClockIcon plus /></div>
      <div className="ml-[14px]"><Divider /></div>
      <div className="ml-[15px] -mt-1"><RowsIcon /></div>
      <div className="ml-[14px] -mt-1"><RowsIcon plus /></div>
      <div className="ml-[15px]"><Divider /></div>
      <MdZoomOut className="ml-[12px] h-6 w-6" />
      <MdZoomIn className="ml-[9px] h-6 w-6" />
      <div className="ml-[13px]"><Divider /></div>
      <MdOutlineBorderColor className="ml-[12px] h-6 w-6" />
      <MdCallMade className="ml-[10px] h-6 w-6" />
      <div className="relative ml-[8px] h-6 w-6">
        <MdOutlineViewQuilt className="h-6 w-6" />
        <svg className="absolute -right-0.5 -bottom-0.5" width="8" height="5" viewBox="0 0 8 5">
          <path d="M1 1h6L4 4z" fill="#31363b" />
        </svg>
      </div>
      <div className="ml-[13px]"><Divider /></div>
      <MdOutlineSettings className="ml-[12px] h-6 w-6" />
      <MdHelp className="ml-[9px] h-6 w-6" />
    </div>
  );
}

function Triangle({ d, w, h }: { d: string; w: number; h: number }) {
  return (
    <svg width={w} height={h} viewBox={`0 0 ${w} ${h}`} className="block shrink-0">
      <path d={d} fill="#c9cdd0" />
    </svg>
  );
}

export default function App() {
  return (
    <div className="flex h-[859px] w-[1581px] flex-col overflow-hidden bg-[#fafafa]">
      <Toolbar />
      <div className="flex gap-2 pt-[10px] pl-[9px]">
        <div className="h-[644px] w-[1541px] overflow-hidden rounded-[4px] border border-[#c9cdd0] bg-white">
          <TracePlot />
        </div>
        <div className="flex w-3 flex-col items-center pt-[7px]">
          <Triangle d="M0 5L5 0l5 5z" w={10} h={5} />
          <div className="mt-1 h-[612px] w-3 rounded-[5px] border border-[#c9cdd0] bg-[#c9cdd0] px-px">
            <div className="h-full rounded-[4px] bg-[#acb1b5]" />
          </div>
          <div className="mt-1"><Triangle d="M0 0h10L5 5z" w={10} h={5} /></div>
        </div>
      </div>
      <div className="mt-2 flex h-3 items-center pl-4">
        <Triangle d="M5 0v10L0 5z" w={5} h={10} />
        <div className="ml-1 flex h-3 w-[1531px] rounded-[5px] border border-[#c9cdd0]">
          <div className="h-full w-[1520px] rounded-[5px] border-y border-[#c9cdd0] bg-[#acb1b5]" />
        </div>
        <div className="ml-[7px]"><Triangle d="M0 0l5 5-5 5z" w={5} h={10} /></div>
      </div>
      <div className="mt-2 ml-[9px] h-[108px] w-[1563px] rounded-[4px] border border-[#c9cdd0] bg-white p-0.5">
        <Overview />
      </div>
      <div className="mt-[9px] flex h-[28px] items-center bg-[#c9cdd0] pr-0.5 pl-1.5">
        <div className="w-[62px] pt-0.5 font-['Noto_Sans'] text-[12px] tracking-[-0.5px] whitespace-nowrap text-[#31363b]">Loading...</div>
        <div className="h-[22px] flex-1 rounded-[3px] bg-[#fafafa]" />
      </div>
    </div>
  );
}
